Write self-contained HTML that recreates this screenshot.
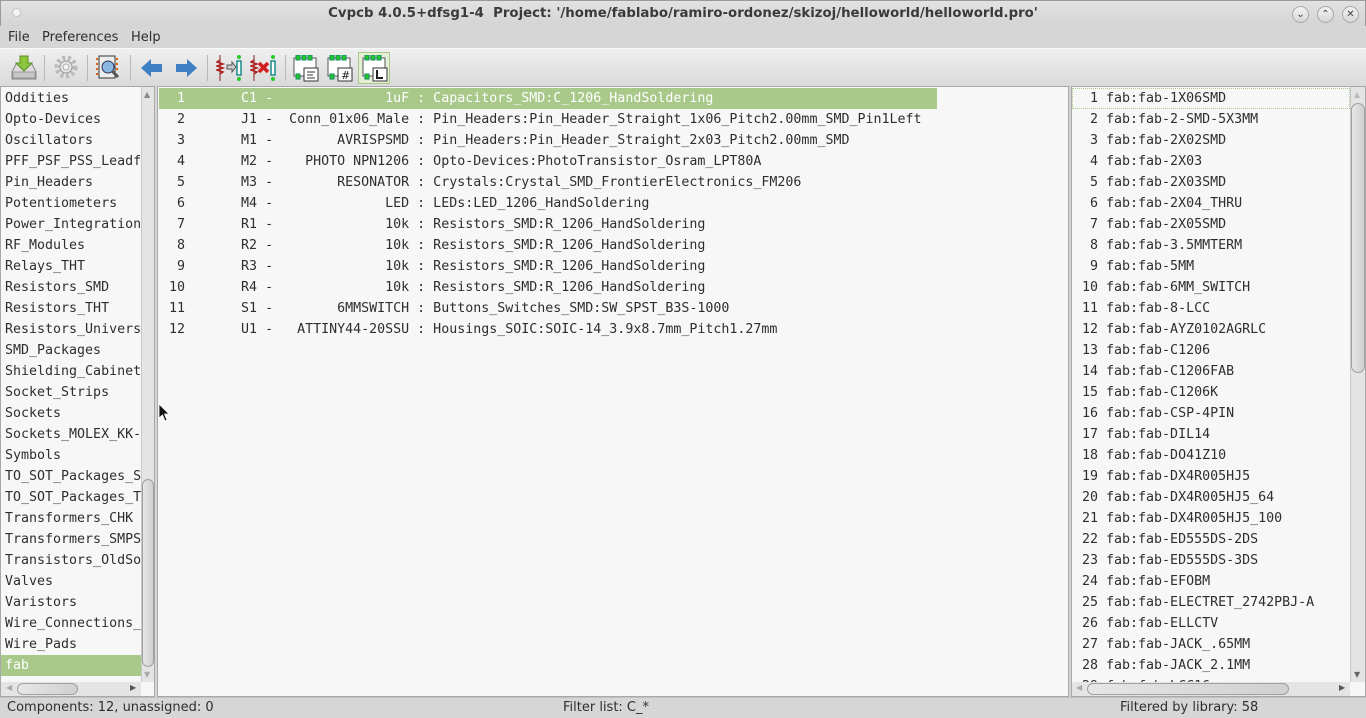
<!DOCTYPE html>
<html><head><meta charset="utf-8"><style>
*{margin:0;padding:0;box-sizing:border-box}
body{width:1366px;height:718px;overflow:hidden;background:#d6d6d6;font-family:"DejaVu Sans","Liberation Sans",sans-serif;font-size:13px;color:#2e2e2e;position:relative}
.abs{position:absolute}
.mono{font-family:"DejaVu Sans Mono","Liberation Mono",monospace;font-size:13.3px;color:#2e2e2e;white-space:pre}
#title{left:0;top:0;width:1366px;height:26px;background:linear-gradient(#e2e2e2,#d4d4d4);border:1px solid #9a9a9a;border-bottom:none}
#title .t{position:absolute;left:0;right:0;top:5px;text-align:center;font-weight:bold;font-size:13.3px;color:#3a3a3a}
.wb{position:absolute;top:5px;width:17px;height:17px;border-radius:50%;border:1px solid #aaa;background:linear-gradient(#f2f2f2,#d8d8d8);font-size:10px;text-align:center;line-height:15px;color:#444}
#menu{left:0;top:26px;width:1366px;height:22px;background:#d6d6d6}
#menu span{position:absolute;top:4px}
#tb{left:0;top:48px;width:1366px;height:38px;background:linear-gradient(#efefef,#dadada);border-top:1px solid #fafafa}
.sep{position:absolute;top:6px;width:1px;height:26px;background:#b8b8b8}
.panel{background:#f7f7f7;border:1px solid #a8a8a8}
.sel{background:#a8c98a;color:#fff}
.vs{background:#e4e4e4;border-left:1px solid #c8c8c8}
.thumb{position:absolute;background:linear-gradient(90deg,#e6e6e6,#d0d0d0);border:1px solid #a0a0a0;border-radius:7px}
</style></head><body>
<div id="title" class="abs"><div class="abs" style="left:11px;top:7px;width:9px;height:9px;border-radius:50%;background:#f4f4f4;border:1px solid #c4c4c4"></div>
<div class="t">Cvpcb 4.0.5+dfsg1-4&nbsp; Project: '/home/fablabo/ramiro-ordonez/skizoj/helloworld/helloworld.pro'</div>
<div class="wb" style="left:1291px">&#8964;</div><div class="wb" style="left:1316px">&#8963;</div><div class="wb" style="left:1341px">&#10005;</div></div>
<div id="menu" class="abs"><span style="left:8px">File</span><span style="left:42px">Preferences</span><span style="left:131px">Help</span></div>
<div id="tb" class="abs">
<svg class="abs" style="left:10px;top:5px" width="28" height="28"><path d="M2 18 L6 10 H22 L26 18 V25 H2Z" fill="#ddd" stroke="#888"/><rect x="3" y="18" width="22" height="6" fill="#c8c8c8" stroke="#999"/><path d="M10 2 H18 V9 H22 L14 17 L6 9 H10Z" fill="#8cc63f" stroke="#5a8f20"/></svg>
<div class="sep" style="left:44px"></div>
<svg class="abs" style="left:53px;top:5px" width="26" height="26"><circle cx="13" cy="13" r="9" fill="none" stroke="#bbb" stroke-width="5" stroke-dasharray="3 2.5"/><circle cx="13" cy="13" r="6" fill="#e8e8e8" stroke="#999"/><circle cx="13" cy="13" r="3" fill="#f4f4f4" stroke="#aaa"/></svg>
<div class="sep" style="left:87px"></div>
<svg class="abs" style="left:95px;top:5px" width="28" height="28"><rect x="4" y="2" width="16" height="22" fill="#eee" stroke="#333"/><g fill="#e0601a"><rect x="1" y="4" width="2" height="2"/><rect x="1" y="9" width="2" height="2"/><rect x="1" y="14" width="2" height="2"/><rect x="1" y="19" width="2" height="2"/><rect x="21" y="4" width="2" height="2"/><rect x="21" y="9" width="2" height="2"/><rect x="21" y="14" width="2" height="2"/></g><circle cx="13" cy="13" r="6" fill="#8ab8e0" stroke="#335"/><path d="M17 17 L23 23" stroke="#555" stroke-width="3"/></svg>
<div class="sep" style="left:130px"></div>
<svg class="abs" style="left:140px;top:9px" width="24" height="20"><path d="M1 10 L11 1 V6 H22 V14 H11 V19Z" fill="#3f7fc4"/></svg>
<svg class="abs" style="left:174px;top:9px" width="24" height="20"><path d="M23 10 L13 1 V6 H2 V14 H13 V19Z" fill="#3f7fc4"/></svg>
<div class="sep" style="left:207px"></div>
<svg class="abs" style="left:216px;top:4px" width="28" height="30"><path d="M4 2 V28" stroke="#8a2020"/><path d="M4 7 L1 9 L7 11 L1 13 L7 15 L1 17 L7 19 L4 21" fill="none" stroke="#b02020" stroke-width="1.5"/><path d="M11 12 H16 V9 L20 14 L16 19 V16 H11Z" fill="#ccc" stroke="#555"/><rect x="21" y="8" width="4" height="14" fill="#fff" stroke="#1a8a8a" stroke-width="1.5"/><circle cx="23" cy="4" r="2" fill="#2c2"/><circle cx="23" cy="26" r="2" fill="#2c2"/></svg>
<svg class="abs" style="left:250px;top:4px" width="28" height="30"><path d="M4 2 V28" stroke="#8a2020"/><path d="M4 7 L1 9 L7 11 L1 13 L7 15 L1 17 L7 19 L4 21" fill="none" stroke="#b02020" stroke-width="1.5"/><path d="M9 10 L18 19 M18 10 L9 19" stroke="#d02020" stroke-width="3.5"/><rect x="21" y="8" width="4" height="14" fill="#fff" stroke="#1a8a8a" stroke-width="1.5"/><circle cx="23" cy="4" r="2" fill="#2c2"/><circle cx="23" cy="26" r="2" fill="#2c2"/></svg>
<div class="sep" style="left:285px"></div>
<svg class="abs" style="left:292px;top:6px" width="28" height="28"><rect x="2" y="3" width="22" height="18" fill="#fff" stroke="#555"/><g fill="#22cc22" stroke="#186"><rect x="4" y="0" width="4" height="5"/><rect x="10" y="0" width="4" height="5"/><rect x="16" y="0" width="4" height="5"/><rect x="4" y="19" width="4" height="5"/></g><rect x="12" y="13" width="14" height="13" fill="#fff" stroke="#333"/><path d="M15 17H23M15 20H21M15 23H23" stroke="#333"/></svg>
<svg class="abs" style="left:326px;top:6px" width="28" height="28"><rect x="2" y="3" width="22" height="18" fill="#fff" stroke="#555"/><g fill="#22cc22" stroke="#186"><rect x="4" y="0" width="4" height="5"/><rect x="10" y="0" width="4" height="5"/><rect x="16" y="0" width="4" height="5"/><rect x="4" y="19" width="4" height="5"/></g><rect x="12" y="13" width="14" height="13" fill="#fff" stroke="#333"/><text x="15" y="24" font-size="11" font-family="DejaVu Sans" fill="#222">#</text></svg>
<div class="abs" style="left:358px;top:3px;width:32px;height:32px;background:#e4efd6;border:1px solid #a9c98a"></div>
<svg class="abs" style="left:361px;top:6px" width="28" height="28"><rect x="2" y="3" width="22" height="18" fill="#fff" stroke="#555"/><g fill="#22cc22" stroke="#186"><rect x="4" y="0" width="4" height="5"/><rect x="10" y="0" width="4" height="5"/><rect x="16" y="0" width="4" height="5"/><rect x="4" y="19" width="4" height="5"/></g><rect x="12" y="13" width="14" height="13" fill="#fff" stroke="#333"/><path d="M16 15V23H22" stroke="#222" stroke-width="2" fill="none"/></svg>
</div>

<!-- left panel -->
<div class="abs panel" style="left:0;top:86px;width:155px;height:611px"></div>
<div class="abs vs" style="left:141px;top:87px;width:13px;height:595px"></div>
<div class="thumb" style="left:142px;top:479px;width:12px;height:188px"></div>
<div class="abs" style="left:144px;top:90px;font-size:8px;color:#888">&#9650;</div>
<div class="abs" style="left:144px;top:670px;font-size:8px;color:#aaa">&#9660;</div>
<div class="abs" style="left:1px;top:682px;width:140px;height:14px;background:#e4e4e4"></div>
<div class="thumb" style="left:17px;top:683px;width:61px;height:12px"></div>
<div class="abs" style="left:6px;top:683px;font-size:8px;color:#aaa">&#9664;</div>
<div class="abs" style="left:130px;top:683px;font-size:8px;color:#555">&#9654;</div>
<div class="abs sel" style="left:1px;top:655px;width:140px;height:21px"></div>
<div class="abs mono" style="left:5px;top:88px;line-height:21px;width:136px;overflow:hidden">Oddities
Opto-Devices
Oscillators
PFF_PSF_PSS_Leadf
Pin_Headers
Potentiometers
Power_Integration
RF_Modules
Relays_THT
Resistors_SMD
Resistors_THT
Resistors_Univers
SMD_Packages
Shielding_Cabinet
Socket_Strips
Sockets
Sockets_MOLEX_KK-
Symbols
TO_SOT_Packages_S
TO_SOT_Packages_T
Transformers_CHK
Transformers_SMPS
Transistors_OldSo
Valves
Varistors
Wire_Connections_
Wire_Pads
<span style="color:#fff">fab</span></div>

<!-- middle panel -->
<div class="abs panel" style="left:157px;top:86px;width:912px;height:611px"></div>
<div class="abs sel" style="left:159px;top:88px;width:778px;height:21px"></div>
<div class="abs mono" style="left:161px;top:88px;line-height:21px"><span style="color:#fff">  1       C1 -              1uF : Capacitors_SMD:C_1206_HandSoldering</span>
  2       J1 -  Conn_01x06_Male : Pin_Headers:Pin_Header_Straight_1x06_Pitch2.00mm_SMD_Pin1Left
  3       M1 -        AVRISPSMD : Pin_Headers:Pin_Header_Straight_2x03_Pitch2.00mm_SMD
  4       M2 -    PHOTO NPN1206 : Opto-Devices:PhotoTransistor_Osram_LPT80A
  5       M3 -        RESONATOR : Crystals:Crystal_SMD_FrontierElectronics_FM206
  6       M4 -              LED : LEDs:LED_1206_HandSoldering
  7       R1 -              10k : Resistors_SMD:R_1206_HandSoldering
  8       R2 -              10k : Resistors_SMD:R_1206_HandSoldering
  9       R3 -              10k : Resistors_SMD:R_1206_HandSoldering
 10       R4 -              10k : Resistors_SMD:R_1206_HandSoldering
 11       S1 -        6MMSWITCH : Buttons_Switches_SMD:SW_SPST_B3S-1000
 12       U1 -   ATTINY44-20SSU : Housings_SOIC:SOIC-14_3.9x8.7mm_Pitch1.27mm</div>
<svg class="abs" style="left:158px;top:403px" width="12" height="20"><path d="M1 1 V15 L4.5 12 L7 18 L9 17 L6.5 11 L11 11Z" fill="#111" stroke="#fff" stroke-width="0.8"/></svg>

<!-- right panel -->
<div class="abs panel" style="left:1071px;top:86px;width:295px;height:611px"></div>
<div class="abs" style="left:1072px;top:88px;width:278px;height:21px;border:1px dotted #a8c98a"></div>
<div class="abs vs" style="left:1350px;top:87px;width:15px;height:595px"></div>
<div class="thumb" style="left:1351px;top:103px;width:14px;height:270px"></div>
<div class="abs" style="left:1354px;top:90px;font-size:8px;color:#bbb">&#9650;</div>
<div class="abs" style="left:1354px;top:670px;font-size:8px;color:#666">&#9660;</div>
<div class="abs" style="left:1072px;top:682px;width:278px;height:14px;background:#e4e4e4"></div>
<div class="thumb" style="left:1087px;top:683px;width:202px;height:12px"></div>
<div class="abs" style="left:1076px;top:683px;font-size:8px;color:#aaa">&#9664;</div>
<div class="abs" style="left:1339px;top:683px;font-size:8px;color:#555">&#9654;</div>
<div class="abs mono" style="left:1082px;top:88px;line-height:21px;height:594px;overflow:hidden"> 1 fab:fab-1X06SMD
 2 fab:fab-2-SMD-5X3MM
 3 fab:fab-2X02SMD
 4 fab:fab-2X03
 5 fab:fab-2X03SMD
 6 fab:fab-2X04_THRU
 7 fab:fab-2X05SMD
 8 fab:fab-3.5MMTERM
 9 fab:fab-5MM
10 fab:fab-6MM_SWITCH
11 fab:fab-8-LCC
12 fab:fab-AYZ0102AGRLC
13 fab:fab-C1206
14 fab:fab-C1206FAB
15 fab:fab-C1206K
16 fab:fab-CSP-4PIN
17 fab:fab-DIL14
18 fab:fab-DO41Z10
19 fab:fab-DX4R005HJ5
20 fab:fab-DX4R005HJ5_64
21 fab:fab-DX4R005HJ5_100
22 fab:fab-ED555DS-2DS
23 fab:fab-ED555DS-3DS
24 fab:fab-EFOBM
25 fab:fab-ELECTRET_2742PBJ-A
26 fab:fab-ELLCTV
27 fab:fab-JACK_.65MM
28 fab:fab-JACK_2.1MM
29 fab:fab-LCC16</div>

<!-- status -->
<div class="abs" style="left:0;top:697px;width:1366px;height:21px;background:#d6d6d6;border-top:1px solid #c0c0c0"></div>
<div class="abs" style="left:7px;top:700px">Components: 12, unassigned: 0</div>
<div class="abs" style="left:563px;top:700px">Filter list: C_*</div>
<div class="abs" style="left:1120px;top:700px">Filtered by library: 58</div>
</body></html>
